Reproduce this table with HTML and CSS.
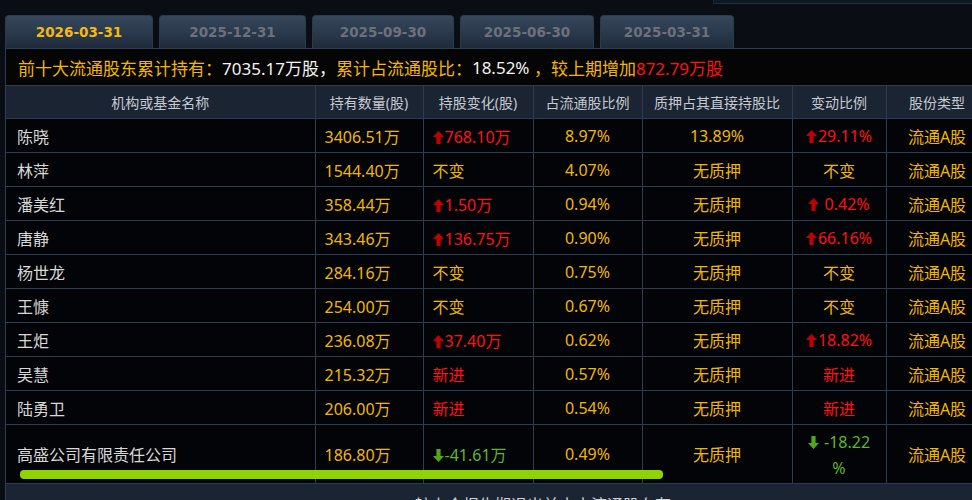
FILE: index.html
```html
<!DOCTYPE html>
<html lang="zh-CN">
<head>
<meta charset="utf-8">
<title>十大流通股东</title>
<link rel="stylesheet" href="styles.css">
</head>
<body>
<div class="topstrip"></div>
<div class="tabs">
  <div class="tab active w1">2026-03-31</div>
  <div class="tab w2">2025-12-31</div>
  <div class="tab w3">2025-09-30</div>
  <div class="tab w4">2025-06-30</div>
  <div class="tab w4">2025-03-31</div>
</div>
<div class="panel">
  <div class="summary">
    <span class="y">前十大流通股东累计持有：</span><span class="w">7035.17万股，</span><span class="y">累计占流通股比：</span><span class="w">18.52%</span><span class="y"> ，较上期增加</span><span class="r">872.79万股</span>
  </div>
  <div class="tablewrap">
    <table class="holders">
      <colgroup>
        <col class="c1"><col class="c2"><col class="c3"><col class="c4"><col class="c5"><col class="c6"><col class="c7">
      </colgroup>
      <thead>
        <tr>
          <th>机构或基金名称</th><th>持有数量(股)</th><th>持股变化(股)</th><th>占流通股比例</th><th>质押占其直接持股比</th><th>变动比例</th><th>股份类型</th>
        </tr>
      </thead>
      <tbody>
        <tr>
          <td class="name">陈晓</td><td class="num">3406.51万</td>
          <td class="chg r"><svg class="arr" viewBox="0 0 11 13"><path d="M5.5 0 L11 6 L7.6 6 L7.6 13 L3.4 13 L3.4 6 L0 6 Z"/></svg>768.10万</td>
          <td class="c">8.97%</td><td class="c">13.89%</td>
          <td class="c r"><svg class="arr" viewBox="0 0 11 13"><path d="M5.5 0 L11 6 L7.6 6 L7.6 13 L3.4 13 L3.4 6 L0 6 Z"/></svg>29.11%</td>
          <td class="c">流通A股</td>
        </tr>
        <tr>
          <td class="name">林萍</td><td class="num">1544.40万</td><td class="chg">不变</td>
          <td class="c">4.07%</td><td class="c">无质押</td><td class="c">不变</td><td class="c">流通A股</td>
        </tr>
        <tr>
          <td class="name">潘美红</td><td class="num">358.44万</td>
          <td class="chg r"><svg class="arr" viewBox="0 0 11 13"><path d="M5.5 0 L11 6 L7.6 6 L7.6 13 L3.4 13 L3.4 6 L0 6 Z"/></svg>1.50万</td>
          <td class="c">0.94%</td><td class="c">无质押</td>
          <td class="c r"><svg class="arr" viewBox="0 0 11 13"><path d="M5.5 0 L11 6 L7.6 6 L7.6 13 L3.4 13 L3.4 6 L0 6 Z"/></svg> 0.42%</td>
          <td class="c">流通A股</td>
        </tr>
        <tr>
          <td class="name">唐静</td><td class="num">343.46万</td>
          <td class="chg r"><svg class="arr" viewBox="0 0 11 13"><path d="M5.5 0 L11 6 L7.6 6 L7.6 13 L3.4 13 L3.4 6 L0 6 Z"/></svg>136.75万</td>
          <td class="c">0.90%</td><td class="c">无质押</td>
          <td class="c r"><svg class="arr" viewBox="0 0 11 13"><path d="M5.5 0 L11 6 L7.6 6 L7.6 13 L3.4 13 L3.4 6 L0 6 Z"/></svg>66.16%</td>
          <td class="c">流通A股</td>
        </tr>
        <tr>
          <td class="name">杨世龙</td><td class="num">284.16万</td><td class="chg">不变</td>
          <td class="c">0.75%</td><td class="c">无质押</td><td class="c">不变</td><td class="c">流通A股</td>
        </tr>
        <tr>
          <td class="name">王慷</td><td class="num">254.00万</td><td class="chg">不变</td>
          <td class="c">0.67%</td><td class="c">无质押</td><td class="c">不变</td><td class="c">流通A股</td>
        </tr>
        <tr>
          <td class="name">王炬</td><td class="num">236.08万</td>
          <td class="chg r"><svg class="arr" viewBox="0 0 11 13"><path d="M5.5 0 L11 6 L7.6 6 L7.6 13 L3.4 13 L3.4 6 L0 6 Z"/></svg>37.40万</td>
          <td class="c">0.62%</td><td class="c">无质押</td>
          <td class="c r"><svg class="arr" viewBox="0 0 11 13"><path d="M5.5 0 L11 6 L7.6 6 L7.6 13 L3.4 13 L3.4 6 L0 6 Z"/></svg>18.82%</td>
          <td class="c">流通A股</td>
        </tr>
        <tr>
          <td class="name">吴慧</td><td class="num">215.32万</td><td class="chg r">新进</td>
          <td class="c">0.57%</td><td class="c">无质押</td><td class="c r">新进</td><td class="c">流通A股</td>
        </tr>
        <tr>
          <td class="name">陆勇卫</td><td class="num">206.00万</td><td class="chg r">新进</td>
          <td class="c">0.54%</td><td class="c">无质押</td><td class="c r">新进</td><td class="c">流通A股</td>
        </tr>
        <tr class="tall">
          <td class="name">高盛公司有限责任公司</td><td class="num">186.80万</td>
          <td class="chg g"><svg class="arr down" viewBox="0 0 11 13"><path d="M5.5 13 L11 7 L7.6 7 L7.6 0 L3.4 0 L3.4 7 L0 7 Z"/></svg>-41.61万</td>
          <td class="c">0.49%</td><td class="c">无质押</td>
          <td class="c g wrap"><svg class="arr down" viewBox="0 0 11 13"><path d="M5.5 13 L11 7 L7.6 7 L7.6 0 L3.4 0 L3.4 7 L0 7 Z"/></svg> -18.22<br>%</td>
          <td class="c">流通A股</td>
        </tr>
      </tbody>
    </table>
    <div class="hbar"></div>
  </div>
  <div class="footer">较上个报告期退出前十大流通股东有</div>
</div>
</body>
</html>
```

FILE: styles.css
```css
html, body {
  margin: 0;
  padding: 0;
}
body {
  width: 972px;
  height: 500px;
  overflow: hidden;
  background: #0a0e14;
  font-family: "Noto Sans", "Noto Sans CJK SC", sans-serif;
  color: #d6d8dc;
}
.topstrip {
  margin-left: 713px;
  width: 300px;
  height: 3px;
  background: #0e1924;
  border-bottom: 1px solid #1c2c3b;
  border-left: 1px solid #1c2c3b;
}
.tabs {
  display: flex;
  gap: 6px;
  margin: 11px 0 0 5px;
  height: 33px;
}
.tab {
  height: 33px;
  box-sizing: border-box;
  border-radius: 4px 4px 0 0;
  background: linear-gradient(#36475c, #1f2b3b);
  border: 1px solid #2b3a4c;
  border-bottom: none;
  font-family: "DejaVu Sans", sans-serif;
  font-weight: bold;
  font-size: 13.5px;
  color: #6c727b;
  display: flex;
  align-items: center;
  justify-content: center;
}
.tab.active { color: #f5b90f; }
.w1 { width: 148px; }
.w2 { width: 147px; }
.w3 { width: 142px; }
.w4 { width: 134px; }

.panel {
  margin-left: 5px;
  width: 990px;
  border: 1px solid #2e3c4f;
  background: #040507;
}
.summary {
  height: 37px;
  box-sizing: border-box;
  padding-left: 12px;
  display: flex;
  align-items: center;
  font-size: 17px;
  background: #050505;
  border-bottom: 1px solid #2e3c4f;
  white-space: pre;
}
.y { color: #f2b705; }
.w { color: #f2f2f2; }
.r { color: #ff1212; }
.g { color: #5bb82a; }

.tablewrap { position: relative; }
.holders {
  border-collapse: collapse;
  table-layout: fixed;
  width: 982px;
  font-size: 16px;
}
.c1 { width: 309px; }
.c2 { width: 108px; }
.c3 { width: 110px; }
.c4 { width: 109px; }
.c5 { width: 150px; }
.c6 { width: 94px; }
.c7 { width: 102px; }
.holders th, .holders td {
  border: 1px solid #2e3c4f;
  padding: 0;
  white-space: nowrap;
}
.holders tr > :first-child { border-left: none; }
.holders thead th {
  border-top: none;
  height: 32px;
  background: #1b2433;
  font-weight: normal;
  font-size: 14px;
  color: #c6cad0;
  text-align: center;
}
.holders tbody tr { height: 34px; }
.holders tbody tr.tall { height: 59px; }
.holders td { color: #f2b705; background: #030407; }
.holders td.name { color: #d8d8d8; padding-left: 11px; }
.holders td.num, .holders td.chg { padding-left: 9px; }
.holders td.c { text-align: center; }
.holders td.r { color: #ff1212; }
.holders td.g { color: #5bb82a; }
.holders td.wrap { line-height: 26px; padding-top: 2px; }
.arr {
  width: 11px;
  height: 13px;
  margin-right: 1px;
  vertical-align: -1px;
  fill: #c20000;
}
.arr.down { fill: #4ea81e; }
.hbar {
  position: absolute;
  left: 14px;
  top: 384px;
  width: 643px;
  height: 9px;
  border-radius: 4px;
  background: #8fd400;
}
.footer {
  height: 40px;
  background: #1b2433;
  padding: 8px 0 0 409px;
  box-sizing: border-box;
  font-size: 16px;
  color: #d0d3d8;
  border-top: 1px solid #2e3c4f;
  margin-top: -1px;
}
```
